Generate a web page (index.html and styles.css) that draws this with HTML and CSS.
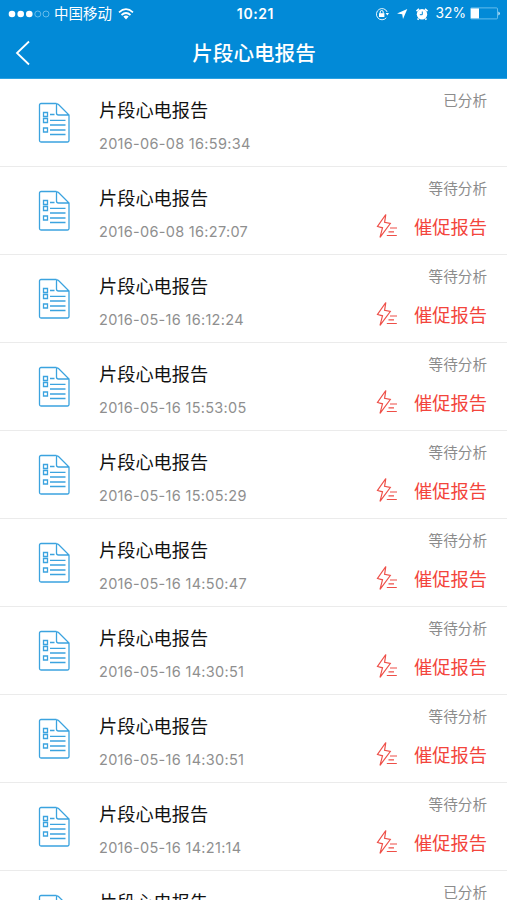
FILE: index.html
```html
<!DOCTYPE html>
<html lang="zh-CN">
<head>
  <meta charset="UTF-8" />
  <meta name="viewport" content="width=device-width, initial-scale=1.0"/>
  <title>片段心电报告</title>
  <link rel="stylesheet" href="styles.css">
</head>
<body>
  <svg class="symbols">
    <symbol id="icon-doc" viewBox="0 0 32 42">
      <path d="M18.500 1.500H3A1.500 1.500 0 0 0 1.500 3V38.500A1.500 1.500 0 0 0 3 40H29.500A1.500 1.500 0 0 0 31 38.500V13L20.500 2.500Q18.500 .8 18.500 3.500V11Q18.500 13 20.500 13H31"/>
      <path d="M5.500 10.500h4v4h-4zM5.500 16.500h4v4h-4zM5.500 26h4v4h-4zM12 12.500h4.500M12 18.300h15.500M12 23h15.500M12 28h15.500M12 32.500h15.500"/>
    </symbol>
    <symbol id="icon-urge" viewBox="0 0 22 28">
      <path d="M9.800 2.500L1.500 14.500L6.500 15.800L4 25.300L14.300 11.500L8.600 10.300Z"/>
      <path d="M14 16h7M12.500 19.800h5.500M10.800 23.500h10"/>
    </symbol>
  </svg>

  <header class="header">
    <div class="status-bar">
      <div class="carrier">
        <svg class="signal" width="42" height="10" viewBox="0 0 42 10">
          <g fill="#fff"><circle cx="4" cy="5" r="3.300"/><circle cx="12.700" cy="5" r="3.300"/><circle cx="21.300" cy="5" r="3.300"/></g>
          <g fill="none" stroke="#8fd0f3" stroke-width=".7"><circle cx="29.800" cy="5" r="3"/><circle cx="38" cy="5" r="3"/></g>
        </svg>
        <span>中国移动</span>
        <svg class="wifi" width="16" height="12" viewBox="0 0 16 12">
          <g fill="none" stroke="#fff" stroke-width="1.700"><path d="M1 4.300Q8-2 15 4.300M3.500 7Q8 3 12.500 7"/></g>
          <path d="M5.300 8.500Q8 6.500 10.700 8.500L8 11.500Z" fill="#fff"/>
        </svg>
      </div>
      <span class="clock">10:21</span>
      <div class="indicators">
        <svg width="14" height="14" viewBox="0 0 14 14">
          <path d="M11.300 10.800A5.600 5.600 0 1 1 12.200 5" fill="none" stroke="#fff" stroke-width=".9"/>
          <path d="M10.700 6h3.300l-1.700 2.500z" fill="#fff"/>
          <path d="M4 6.200h5.400v3.800H4z" fill="#fff"/>
          <path d="M5.200 6.500V5a1.500 1.500 0 0 1 3 0v1.500" fill="none" stroke="#fff"/>
        </svg>
        <svg width="12" height="12" viewBox="0 0 12 12"><path d="M11.300 1L7 11L6.200 6.200L1 5.500Z" fill="#fff"/></svg>
        <svg width="14" height="14" viewBox="0 0 14 14">
          <circle cx="7" cy="7.300" r="5.200" fill="#fff"/>
          <path d="M1.500 4.200L4 1.800M12.500 4.200L10 1.800M3.500 11.500L2.700 12.700M10.500 11.500L11.300 12.700" stroke="#fff" stroke-width="1.600"/>
          <path d="M7.300 4.500v3.200H4.800" fill="none" stroke="#028ad7"/>
        </svg>
        <span class="percent">32%</span>
        <svg class="battery" width="31" height="13" viewBox="0 0 31 13">
          <rect x=".5" y=".9" width="27" height="11" rx="1" fill="none" stroke="#7fcaf2" stroke-width=".8"/>
          <rect x="1" y="1.400" width="8" height="10" fill="#fff"/>
          <path d="M28.500 4.500q2.500 2 0 4z" fill="#fff"/>
        </svg>
      </div>
    </div>
    <div class="nav-bar">
      <a class="back" href="#"><svg width="16" height="26" viewBox="0 0 16 26"><path d="M14 1.500L2 13L14 24.500"/></svg></a>
      <h1>片段心电报告</h1>
    </div>
  </header>

  <ul class="reports" id="reports"></ul>

  <script>
    const reports = [
      { time: "2016-06-08 16:59:34", done: true },
      { time: "2016-06-08 16:27:07", done: false },
      { time: "2016-05-16 16:12:24", done: false },
      { time: "2016-05-16 15:53:05", done: false },
      { time: "2016-05-16 15:05:29", done: false },
      { time: "2016-05-16 14:50:47", done: false },
      { time: "2016-05-16 14:30:51", done: false },
      { time: "2016-05-16 14:30:51", done: false },
      { time: "2016-05-16 14:21:14", done: false },
      { time: "", done: true }
    ];

    document.getElementById("reports").innerHTML = reports.map(r => `
      <li class="report">
        <svg class="doc"><use href="#icon-doc"/></svg>
        <div class="info">
          <h2>片段心电报告</h2>
          <time>${r.time}</time>
        </div>
        <div class="state">
          <span class="label">${r.done ? "已分析" : "等待分析"}</span>
          ${r.done ? "" : `<a class="urge" href="#"><svg><use href="#icon-urge"/></svg>催促报告</a>`}
        </div>
      </li>`).join("");
  </script>
</body>
</html>
```
FILE: styles.css
```css
* {
  box-sizing: border-box;
}

body {
  display: flex;
  flex-direction: column;
  margin: 0;
  height: 100vh;
  overflow: hidden;
  background: #fff;
  color: #111;
  font-family: Inter, "Noto Sans CJK SC", sans-serif;
}

h1, h2, ul {
  margin: 0;
  padding: 0;
  font-weight: 400;
}

a {
  color: inherit;
  text-decoration: none;
}

svg {
  display: block;
  flex-shrink: 0;
}

.symbols {
  display: none;
}

.header {
  flex-shrink: 0;
  height: 79px;
  background: #028ad7;
  border-bottom: 1px solid #2ba2e2;
  color: #fff;
}

.status-bar {
  display: grid;
  grid-template-columns: 1fr auto 1fr;
  align-items: center;
  height: 27px;
  padding: 0 6px 0 8px;
  font-size: 14.5px;
  line-height: 27px;
}

.carrier, .indicators {
  display: flex;
  align-items: center;
}

.signal {
  margin-right: 4px;
}

.wifi {
  margin-left: 6px;
}

.clock {
  padding-left: 2px;
  font-size: 14px;
  font-weight: 600;
  letter-spacing: 0.6px;
}

.indicators {
  justify-content: flex-end;
  gap: 7px;
}

.indicators .percent {
  font-size: 13.8px;
}

.battery {
  margin-left: -3px;
}

.nav-bar {
  display: grid;
  grid-template-columns: 60px 1fr 60px;
  align-items: center;
  height: 50px;
}

.nav-bar h1 {
  padding: 2px 0 0 1px;
  font-size: 20.6px;
  font-weight: 500;
  line-height: 50px;
  text-align: center;
}

.back {
  padding-left: 15px;
}

.back path {
  fill: none;
  stroke: #fff;
  stroke-width: 1.8;
}

.reports {
  flex: 1;
  min-height: 0;
  overflow: hidden;
  list-style: none;
}

.report {
  display: flex;
  height: 88px;
  padding: 0 20px 0 38px;
  border-bottom: 1px solid #ebebeb;
}

.doc {
  width: 32px;
  height: 42px;
  margin: 23px 29px 0 0;
  fill: none;
  stroke: #3ba3df;
  stroke-width: 1.3;
}

.info {
  flex: 1;
  padding-top: 17px;
}

.info h2 {
  font-size: 18.2px;
  line-height: 28px;
}

.info time {
  display: block;
  margin-top: 10px;
  color: #8f8f8f;
  font-size: 14.5px;
  line-height: 20px;
  letter-spacing: 0.3px;
}

.state {
  display: flex;
  flex-direction: column;
  align-items: flex-end;
  padding-top: 12px;
}

.label {
  color: #8c8c8c;
  font-size: 14.6px;
  line-height: 20px;
}

.urge {
  display: flex;
  align-items: center;
  gap: 16px;
  margin-top: 13px;
  color: #f3453c;
  font-size: 18.3px;
  line-height: 30px;
}

.urge svg {
  width: 22px;
  height: 28px;
  margin-bottom: 2px;
  fill: none;
  stroke: #ee4f48;
  stroke-width: 1.2;
}
```
